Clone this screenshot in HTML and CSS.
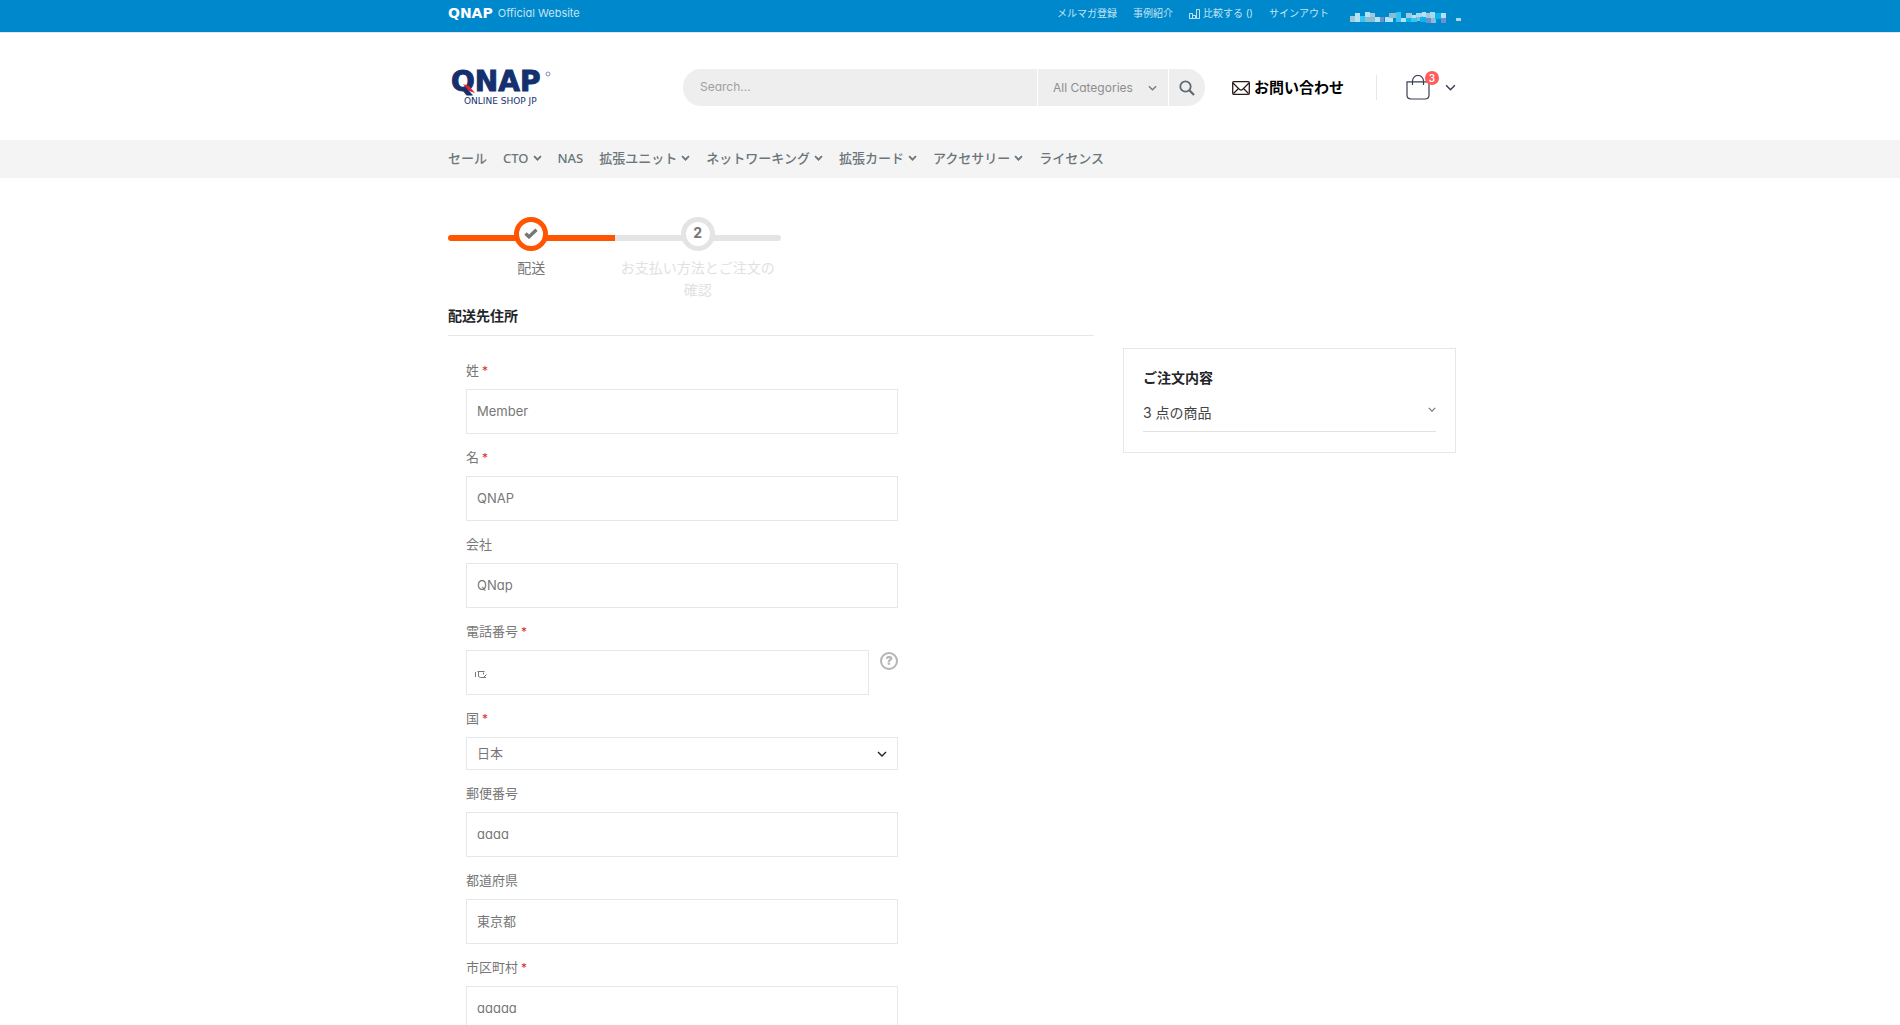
FILE: index.html
```html
<!DOCTYPE html>
<html lang="ja">
<head>
<meta charset="utf-8">
<meta name="viewport" content="width=device-width, initial-scale=1">
<title>QNAP Online Shop JP</title>
<link rel="stylesheet" href="styles.css">
</head>
<body>
<svg class="defs" aria-hidden="true">
  <symbol id="chevron" viewBox="0 0 10 6"><path d="M1 1l4 4 4-4" fill="none" stroke="currentColor" stroke-width="1.4"/></symbol>
  <symbol id="chevron-bold" viewBox="0 0 10 6"><path d="M1.200 1l3.800 3.800L8.800 1" fill="none" stroke="currentColor" stroke-width="2"/></symbol>
</svg>

<div class="topbar">
  <div class="container topbar-row">
    <a class="official" href="#"><strong class="official-mark">QNAP</strong><span>Official Website</span></a>
    <nav class="toplinks">
      <a href="#">メルマガ登録</a>
      <a href="#">事例紹介</a>
      <a class="compare" href="#">
        <svg width="11" height="10" viewBox="0 0 11 10" fill="none" stroke="currentColor"><path d="M.5 4.500h3v5h-3zM3.500 6.500h3v3h-3zM7.500.5h3v9h-3z"/></svg>
        比較する ()</a>
      <a href="#">サインアウト</a>
      <svg class="account" width="112" height="14" viewBox="0 0 112 14" shape-rendering="crispEdges" aria-label="アカウント">
        <path fill="#9fc9d8" d="M0 7h6v6H0zM20 4h5v6h-5zM56 4h6v6h-6zM76 4h4v5h-4z"/>
        <path fill="#b4e2f5" d="M5 4h5v9H5zM15 3h5v10h-5zM25 8h5v5h-5zM35 8h8v5h-8zM51 9h5v4h-5zM62 6h5v6h-5zM72 3h4v5h-4zM91 4h5v5h-5z"/>
        <path fill="#8cbcd0" d="M15 8h10v5H15zM39 4h7v5h-7zM66 7h7v5h-7zM80 9h6v5h-6z"/>
        <path fill="#35c5f4" d="M10 7h5v6h-5zM46 3h5v10h-5zM61 9h6v4h-6z"/>
        <path fill="#6c8fd4" d="M30 8h4v5h-4zM76 9h5v5h-5zM91 9h5v5h-5z"/>
        <path fill="#08b6ee" d="M56 9h5v4h-5zM70 8h6v5h-6zM85 4h6v6h-6z"/>
        <path fill="#a9d9ef" d="M66 4h6v4h-6zM80 3h5v6h-5zM106 9h5v3h-5z"/>
      </svg>
    </nav>
  </div>
</div>

<header class="header">
  <div class="container header-row">
    <a class="logo" href="#" aria-label="QNAP Online Shop JP">
      <svg width="115" height="38" viewBox="0 0 115 38">
        <text class="logo-name" x="3" y="22">QNAP</text>
        <path d="M15 15l6 2 6 7-6-2z" fill="#e8202a"/>
        <circle cx="100" cy="5" r="2" fill="none" stroke="#7d8db4"/>
        <text class="logo-sub" x="16" y="35">ONLINE SHOP JP</text>
      </svg>
    </a>
    <form class="search">
      <input class="search-text" type="text" placeholder="Search..." aria-label="Search">
      <div class="search-category">
        <select aria-label="Category"><option>All Categories</option></select>
        <svg class="select-arrow" width="9" height="6"><use href="#chevron"/></svg>
      </div>
      <button class="search-button" type="button" aria-label="Search">
        <svg width="16" height="16" viewBox="0 0 16 16" fill="none" stroke="#5d6a73"><circle cx="6.500" cy="6.500" r="5.200" stroke-width="1.800"/><path d="M10.300 10.300l4.700 4.700" stroke-width="2.200"/></svg>
      </button>
    </form>
    <a class="contact" href="#">
      <svg width="18" height="14" viewBox="0 0 18 14" fill="none" stroke="#2b1a1a" stroke-width="1.300"><rect x=".7" y=".7" width="16.600" height="12.600" rx="1"/><path d="M1 2l6.500 6.500q1.500 1 3 0L17 2M1.500 12.500L6 8M16.500 12.500L12 8"/></svg>
      お問い合わせ</a>
    <div class="cart">
      <button type="button" aria-label="カート">
        <span class="bag">
          <svg width="24" height="25" viewBox="0 0 24 25" fill="none" stroke="#39404f" stroke-width="1.200"><path d="M1 6.800h22v13.200q0 4-4 4H5q-4 0-4-4zM6.500 10V6a5.500 5.500 0 0 1 11 0v4"/></svg>
          <span class="badge">3</span>
        </span>
        <svg width="11" height="7"><use href="#chevron"/></svg>
      </button>
    </div>
  </div>
</header>

<nav class="menu">
  <div class="container menu-row">
    <a href="#">セール</a>
    <a href="#">CTO<svg width="9" height="6"><use href="#chevron-bold"/></svg></a>
    <a href="#">NAS</a>
    <a href="#">拡張ユニット<svg width="9" height="6"><use href="#chevron-bold"/></svg></a>
    <a href="#">ネットワーキング<svg width="9" height="6"><use href="#chevron-bold"/></svg></a>
    <a href="#">拡張カード<svg width="9" height="6"><use href="#chevron-bold"/></svg></a>
    <a href="#">アクセサリー<svg width="9" height="6"><use href="#chevron-bold"/></svg></a>
    <a href="#">ライセンス</a>
  </div>
</nav>

<main class="container main">
  <ol class="steps">
    <li class="step active">
      <span class="dot"><svg width="14" height="11" viewBox="0 0 14 11"><path d="M1.500 5.500l3.500 3.300L12.500 1.800" fill="none" stroke="#777" stroke-width="3.400"/></svg></span>
      <span>配送</span>
    </li>
    <li class="step">
      <span class="dot">2</span>
      <span>お支払い方法とご注文の確認</span>
    </li>
  </ol>

  <div class="columns">
    <section>
      <h2 class="title">配送先住所</h2>
      <form class="address">
        <div class="field"><label for="lastname">姓<em>*</em></label><input id="lastname" type="text" value="Member"></div>
        <div class="field"><label for="firstname">名<em>*</em></label><input id="firstname" type="text" value="QNAP"></div>
        <div class="field"><label for="company">会社</label><input id="company" type="text" value="QNap"></div>
        <div class="field">
          <label for="phone">電話番号<em>*</em></label>
          <div class="phone">
            <div class="phone-box">
              <input id="phone" type="tel">
              <svg class="masked" width="12" height="8" viewBox="0 0 12 8" fill="none" stroke="#777"><path d="M.5 1v5M2.500.5h7M3.500 1v4.500l2 1h5.500M8.500 1.500v2M11.500 3.500L9 6"/></svg>
            </div>
            <button class="help" type="button" aria-label="ヘルプ">?</button>
          </div>
        </div>
        <div class="field">
          <label for="country">国<em>*</em></label>
          <div class="country">
            <select id="country"><option>日本</option></select>
            <svg class="select-arrow" width="10" height="6"><use href="#chevron"/></svg>
          </div>
        </div>
        <div class="field"><label for="zip">郵便番号</label><input id="zip" type="text" value="aaaa"></div>
        <div class="field"><label for="region">都道府県</label><input id="region" type="text" value="東京都"></div>
        <div class="field"><label for="city">市区町村<em>*</em></label><input id="city" type="text" value="aaaaa"></div>
      </form>
    </section>

    <aside class="summary">
      <h2>ご注文内容</h2>
      <button class="items" type="button">3 点の商品<svg width="8" height="5"><use href="#chevron"/></svg></button>
    </aside>
  </div>
</main>
</body>
</html>
```

FILE: styles.css
```css
* { box-sizing: border-box; }

body {
  margin: 0;
  background: #fff;
  color: #777;
  font-family: Inter, "Noto Sans CJK JP", sans-serif;
  font-feature-settings: "cv11";
  font-size: 13px;
  line-height: 20px;
}

a { color: inherit; text-decoration: none; }
h2, ol { margin: 0; padding: 0; }
input, select, button { font: inherit; font-feature-settings: inherit; color: inherit; margin: 0; border-radius: 0; }
button { border: 0; padding: 0; background: none; }
select { appearance: none; }
.defs { position: absolute; width: 0; height: 0; }

.container {
  max-width: 1012px;
  margin: 0 auto;
  padding-left: 4px;
}

/* Top bar */
.topbar {
  background: #08c;
  border-bottom: 1px solid #e1e8ec;
  color: #c4e4f4;
  font-size: 10px;
}
.topbar-row {
  display: flex;
  justify-content: space-between;
  align-items: flex-start;
  height: 32px;
  padding-top: 3px;
}
.official { display: flex; align-items: center; gap: 5px; font-size: 11px; }
.official-mark { color: #fff; font-family: "DejaVu Sans", sans-serif; font-size: 14px; }
.toplinks { display: flex; gap: 16px; white-space: nowrap; }
.compare svg { vertical-align: -2px; }
.account { margin: 6px -6px 0 5px; }

/* Header */
.header-row {
  display: flex;
  align-items: center;
  height: 107px;
  padding-top: 2px;
}
.logo svg { display: block; }
.logo-name { font: bold 28px "DejaVu Sans", sans-serif; fill: #14306e; stroke: #14306e; stroke-width: 1; }
.logo-sub { font: 9px "DejaVu Sans", sans-serif; fill: #14306e; }
.search {
  display: flex;
  flex: 1;
  height: 37px;
  margin-left: 120px;
  border-radius: 18px;
  background: #eee;
  overflow: hidden;
  font-size: 12px;
}
.search-text {
  flex: 1;
  min-width: 0;
  padding: 0 17px 2px;
  border: 0;
  background: none;
}
.search-text::placeholder { color: #a0a0a0; }
.search-category {
  position: relative;
  width: 132px;
  border-left: 1px solid #fff;
  border-right: 1px solid #fff;
}
.search-category select {
  width: 100%;
  height: 100%;
  padding: 0 15px;
  border: 0;
  background: none;
  color: #8d8d8d;
}
.search-button {
  display: flex;
  align-items: center;
  width: 36px;
  padding-left: 10px;
}
.select-arrow {
  position: absolute;
  right: 11px;
  top: 50%;
  margin-top: -3px;
  pointer-events: none;
}
.contact {
  display: flex;
  align-items: center;
  gap: 4px;
  margin-left: 27px;
  color: #000;
  font-size: 15px;
  font-weight: 700;
}
.cart {
  margin-left: 32px;
  padding-left: 29px;
  border-left: 1px solid #e7e7e7;
}
.cart button { display: flex; align-items: center; gap: 15px; color: #39404f; }
.bag { position: relative; height: 25px; }
.badge {
  position: absolute;
  right: -9px;
  top: -4px;
  width: 14px;
  height: 14px;
  border-radius: 7px;
  background: #ff5b5b;
  color: #fff;
  font-size: 10px;
  font-weight: 600;
  line-height: 14px;
}

/* Category menu */
.menu { background: #f4f4f4; color: #6a747a; font-family: "Noto Sans", "Noto Sans CJK JP", sans-serif; font-weight: 500; }
.menu-row { display: flex; gap: 16px; align-items: center; height: 38px; padding-bottom: 2px; white-space: nowrap; }
.menu-row a { display: flex; align-items: center; gap: 4px; }

/* Checkout progress */
.main { padding-top: 39px; padding-bottom: 40px; }
.steps { display: flex; width: 333px; height: 84px; list-style: none; font-size: 14px; line-height: 22px; text-align: center; }
.step {
  position: relative;
  flex: 1;
  display: flex;
  flex-direction: column;
  align-items: center;
  gap: 6px;
  color: #e1e1e1;
}
.step::before {
  content: "";
  position: absolute;
  z-index: -1;
  top: 18px;
  left: 0;
  right: 0;
  height: 6px;
  border-radius: 0 3px 3px 0;
  background: #e4e4e4;
}
.step.active { color: #777; }
.step.active::before { background: #ff5501; border-radius: 3px 0 0 3px; }
.dot {
  display: flex;
  align-items: center;
  justify-content: center;
  width: 34px;
  height: 34px;
  padding-bottom: 2px;
  border: 5px solid #e4e4e4;
  border-radius: 50%;
  background: #fff;
  color: #777;
  font-weight: 700;
}
.step.active .dot { border-color: #ff5501; }

/* Form and summary */
.columns { display: grid; grid-template-columns: 1fr 333px; gap: 29px; align-items: start; }
.title {
  height: 35px;
  border-bottom: 1px solid #e7e7e7;
  color: #222529;
  font-size: 14px;
  line-height: 30px;
}
.address { display: flex; flex-direction: column; gap: 14px; width: 450px; max-width: 100%; padding: 25px 0 0 18px; }
.field { display: flex; flex-direction: column; gap: 9px; }
.field label { height: 19px; line-height: 19px; }
.field em { margin-left: 3px; color: #e02b27; font-size: 12px; font-style: normal; }
.field input, .field select {
  display: block;
  width: 100%;
  padding: 0 10px 2px;
  border: 1px solid #e7e7e7;
  background: #fff;
}
.field input { height: 45px; }
.field select { height: 33px; }
.phone { display: flex; gap: 11px; }
.phone-box { position: relative; flex: 1; }
.masked { position: absolute; left: 9px; top: 21px; }
.help {
  width: 18px;
  height: 18px;
  margin-top: 2px;
  border: 2px solid #b5b5b5;
  border-radius: 50%;
  color: #b5b5b5;
  font-size: 12px;
  font-weight: 900;
  line-height: 14px;
}
.country { position: relative; }
.country .select-arrow { color: #222; }
.summary { margin-top: 47px; padding: 19px 19px 20px; border: 1px solid #e7e7e7; }
.summary h2 { color: #222529; font-size: 14px; line-height: 20px; }
.items {
  display: flex;
  justify-content: space-between;
  width: 100%;
  margin-top: 10px;
  padding: 5px 0 8px;
  border-bottom: 1px solid #e1e1e1;
  color: #444;
  font-size: 14px;
}
.items svg { margin-top: 4px; color: #777; }
```
